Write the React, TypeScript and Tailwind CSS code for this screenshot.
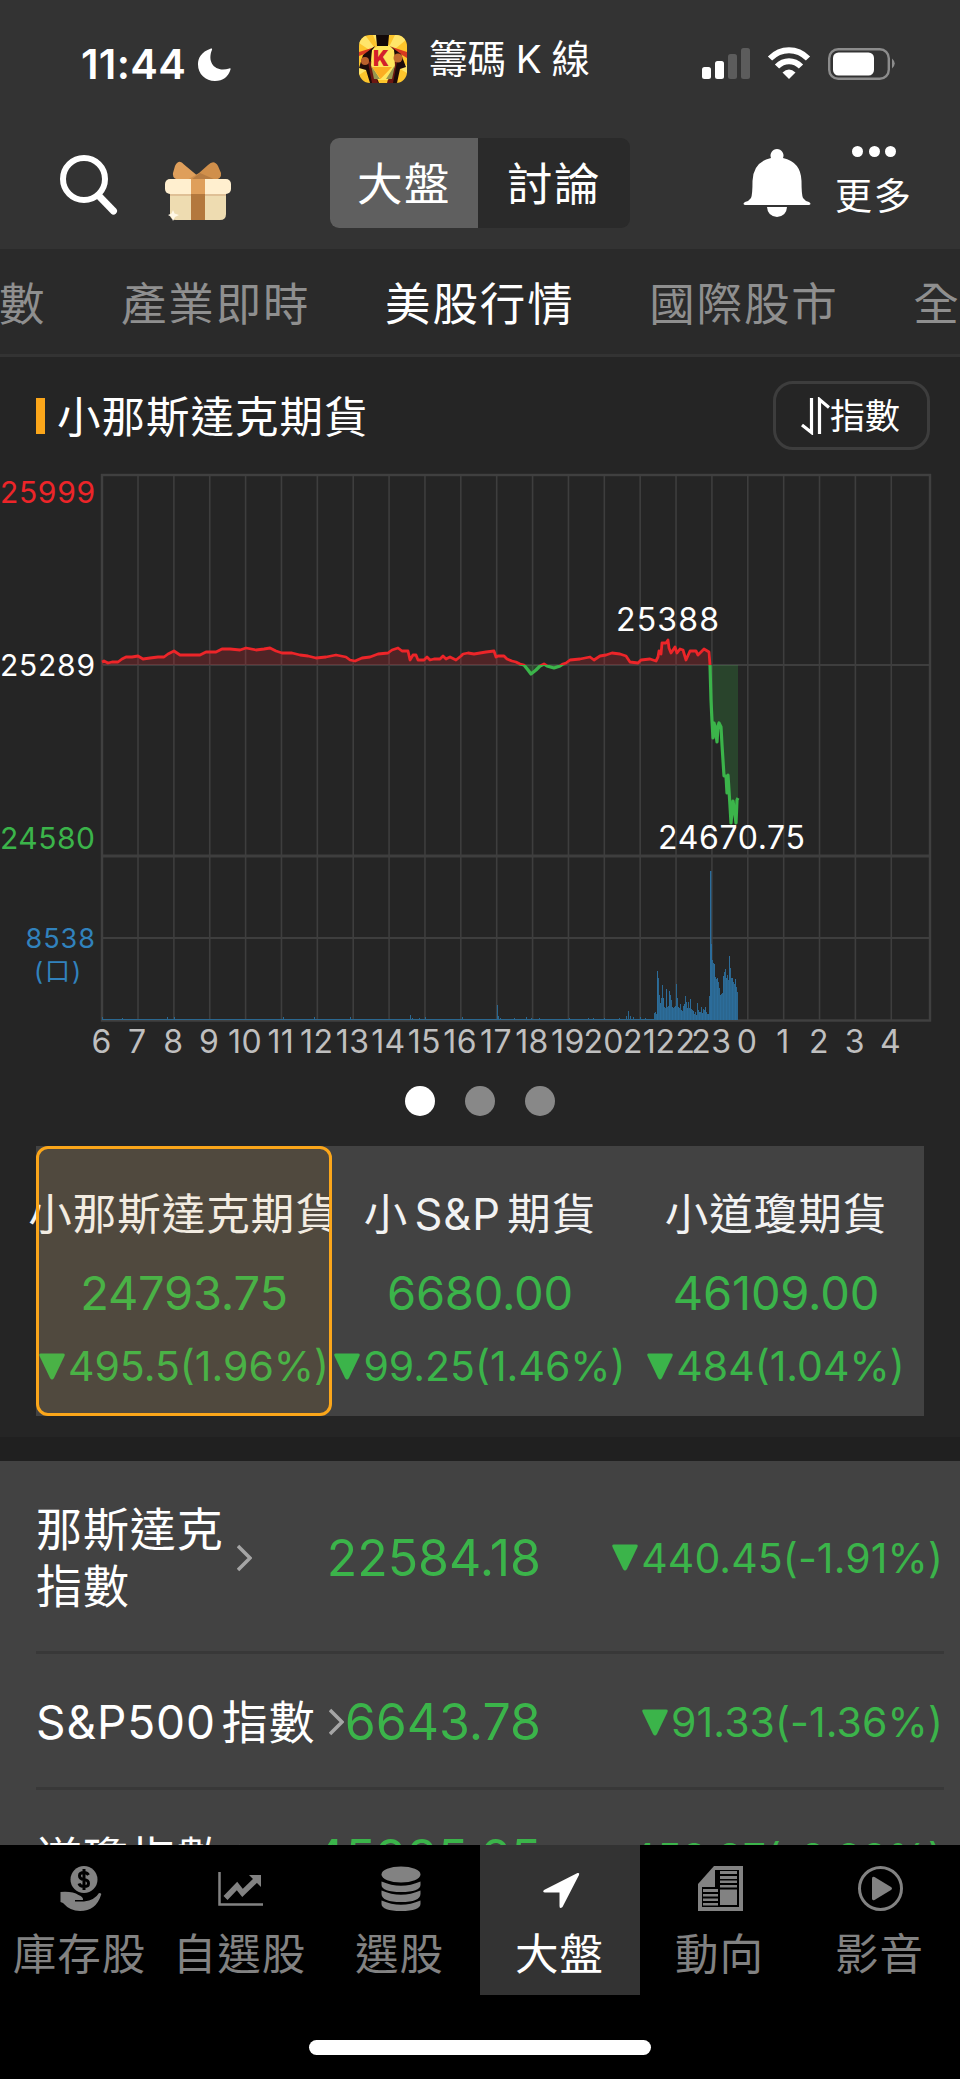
import React from "react";

type Quote = {
  name: string[];
  price: string;
  change: string;
};

const futures = [
  { name: "小那斯達克期貨", price: "24793.75", change: "495.5(1.96%)" },
  { name: "小 S&P 期貨", price: "6680.00", change: "99.25(1.46%)" },
  { name: "小道瓊期貨", price: "46109.00", change: "484(1.04%)" },
];

const indexes: Quote[] = [
  { name: ["那斯達克", "指數"], price: "22584.18", change: "440.45(-1.91%)" },
  { name: ["S&P500 指數"], price: "6643.78", change: "91.33(-1.36%)" },
  { name: ["道瓊指數"], price: "45985.65", change: "459.87(-0.99%)" },
];

const tabs = ["數", "產業即時", "美股行情", "國際股市", "全"];

const hours = [
  "6", "7", "8", "9", "10", "11", "12", "13", "14", "15", "16", "17",
  "18", "19", "20", "21", "22", "23", "0", "1", "2", "3", "4",
];

const BASE = 665;

const pricePoints: number[][] = [
  [102, 662], [104, 661], [108, 663], [112, 662], [118, 662], [122, 659], [126, 657], [132, 657],
  [138, 656], [143, 659], [150, 658], [158, 657], [164, 657], [168, 654], [174, 651], [180, 655],
  [190, 655], [200, 655], [206, 652], [216, 652], [222, 649], [230, 649], [240, 650], [246, 648],
  [256, 650], [264, 649], [270, 648], [276, 651], [282, 653], [292, 653], [300, 655], [308, 656],
  [316, 658], [326, 657], [336, 655], [346, 657], [350, 660], [355, 661], [362, 658], [370, 657],
  [378, 654], [388, 653], [392, 650], [398, 648], [402, 651], [408, 651], [410, 660], [413, 655],
  [416, 655], [418, 660], [424, 660], [427, 657], [430, 660], [434, 659], [440, 659], [443, 656],
  [446, 659], [450, 657], [456, 660], [461, 656], [463, 654], [468, 653], [474, 654], [480, 653],
  [486, 652], [494, 651], [496, 657], [498, 656], [504, 656], [507, 659], [512, 661], [516, 662],
  [520, 664], [524, 665], [528, 670], [531, 674], [536, 670], [540, 666], [544, 664], [547, 666],
  [554, 668], [560, 666], [563, 664], [566, 663], [570, 660], [580, 659], [590, 657], [594, 660],
  [600, 656], [606, 655], [612, 653], [620, 654], [626, 656], [630, 662], [638, 663], [641, 660],
  [650, 659], [656, 661], [658, 657], [659, 651], [661, 654], [662, 643], [666, 643], [668, 640],
  [669, 648], [671, 653], [675, 647], [677, 653], [680, 649], [683, 650], [686, 660], [690, 651],
  [696, 651], [698, 655], [704, 649], [709, 652], [710, 665], [711, 700], [712, 721], [713, 738],
  [714, 723], [715, 727], [717, 742], [718, 726], [719, 723], [721, 727], [722, 745], [724, 776],
  [726, 776], [727, 793], [728, 775], [730, 806], [731, 823], [733, 801], [735, 815], [736, 823],
  [737, 800], [738, 798],
];

const thinVolume: number[][] = [
  [102, 3], [122, 2], [167, 3], [174, 3], [180, 1], [204, 1], [283, 3], [314, 3], [350, 3],
  [410, 5], [412, 2], [419, 2], [425, 3], [462, 3], [497, 15], [498, 4], [500, 2], [514, 2],
  [526, 3], [531, 2], [539, 2], [569, 2], [588, 2], [593, 2], [604, 2], [619, 2], [626, 4],
  [628, 9], [630, 4], [633, 3], [640, 3], [645, 2], [654, 7], [655, 8], [656, 6],
];

// one bar per pixel column, starting at x = 657
const thickVolume = [
  49, 42, 25, 17, 22, 35, 22, 13, 12, 31, 13, 14, 29, 25, 20, 13, 12, 13, 14, 36, 22, 13, 12, 16,
  10, 9, 14, 16, 24, 18, 12, 18, 12, 21, 11, 10, 9, 6, 8, 5, 17, 10, 8, 8, 13, 7, 11, 10, 13, 8, 6,
  6, 24, 148, 76, 60, 57, 56, 43, 41, 42, 38, 32, 25, 26, 27, 44, 48, 51, 42, 45, 40, 64, 52, 42,
  42, 38, 36, 41, 33, 28,
];

const Triangle = () => (
  <svg width="26" height="27" viewBox="0 0 26 27" className="shrink-0">
    <path d="M2 .5h22q2.500 0 1.500 2.500L15 25q-2 3-4 0L.5 3Q-.5.5 2 .5z" fill="#3bb44a" />
  </svg>
);

const AppIcon = () => (
  <svg width="48" height="48" viewBox="0 0 48 48" className="rounded-[11px]">
    <rect width="48" height="48" fill="#fdc52c" />
    <path d="M24 24L0 8V0h6zM24 24L14 0h6zM24 24L36 0h12v4zM24 24L48 30v8zM24 24L0 32v8z" fill="#ffe56a" />
    <path d="M0 17L16 12l-8 6-8 3zM30 11l18 6v6l-10-6z" fill="#d83a20" />
    <path d="M16 11L4 20l-4 13 7 2 4 13h9L12 28l1-12zM31 11l11 8 5 13-6 2-3 14h-9l7-20-1-12z" fill="#1c0b0a" />
    <path d="M9 27l4 21h6l-6-22zM38 27l-4 21h-6l6-22z" fill="#6b1713" />
    <path d="M13 15L20 10h10l5 5 1 16-7 14H19l-7-14z" fill="#ffe65c" />
    <path d="M17 0h13l-1 11H18z" fill="#120807" />
    <path d="M12 30l9 14h-6zM36 30l-9 14h6z" fill="#97964f" />
    <path d="M13 32h20L21.500 44z" fill="#fbae22" />
    <circle cx="6" cy="26" r="4" fill="#b9602c" />
    <circle cx="39" cy="23" r="4.500" fill="#c06a2e" />
    <text x="22" y="31" textAnchor="middle" fontSize="21" fontWeight="900" fontFamily="Inter, sans-serif" fill="#d3202a">K</text>
  </svg>
);

const StatusBar = () => (
  <div className="flex h-[126px] items-start">
    <span className="mt-[43px] ml-[81px] w-[117px] text-[41.500px] leading-[42px] font-semibold tracking-[0.300px]">11:44</span>
    <svg width="34" height="34" viewBox="0 0 34 34" className="mt-[47px]">
      <path d="M13 1.500C3 5 0 11 0 17.500 0 27 7.500 34 17 34c8 0 13.500-4.500 15.500-11.500.3-1-.3-1.500-1.200-1.100C18 26 8.500 16 14 2.800c.4-1-.1-1.600-1-1.300z" fill="#fff" />
    </svg>
    <div className="mt-[35px] ml-[127px]">
      <AppIcon />
    </div>
    <span className="mt-[39px] ml-[22px] w-[250px] text-[38.500px] leading-[40px] [word-spacing:-1px]">籌碼 K 線</span>
    <svg width="194" height="34" viewBox="0 0 194 34" className="mt-[47px] ml-[23px]">
      <rect x="0" y="20" width="9" height="12" rx="2.500" fill="#fff" />
      <rect x="13" y="14" width="9" height="18" rx="2.500" fill="#fff" />
      <rect x="26" y="7" width="9" height="25" rx="2.500" fill="#5c5c5c" />
      <rect x="39" y="1" width="9" height="31" rx="2.500" fill="#5c5c5c" />
      <path d="M68 11.500C79 .5 95 .5 106 11.500" stroke="#fff" strokeWidth="6" fill="none" />
      <path d="M75 19.500C82 12.500 92 12.500 99 19.500" stroke="#fff" strokeWidth="6" fill="none" />
      <path d="M80.500 25.500Q87 19.500 93.500 25.500L87 32z" fill="#fff" />
      <rect x="127.200" y="2.200" width="59.600" height="29.600" rx="9" stroke="#8c8c8c" strokeWidth="2.400" fill="none" />
      <rect x="131" y="5.500" width="41" height="23" rx="5.500" fill="#fff" />
      <path d="M190 11.500q5.500 5 0 10z" fill="#8c8c8c" />
    </svg>
  </div>
);

const TopBar = () => (
  <div className="flex h-[123px] items-start">
    <svg width="60" height="62" viewBox="0 0 60 62" className="mt-[28px] ml-[59px]" fill="none" stroke="#fff">
      <circle cx="25" cy="25" r="21" strokeWidth="6" />
      <path d="M40 42l14.500 15" strokeWidth="7" strokeLinecap="round" />
    </svg>
    <svg width="68" height="62" viewBox="1 0 68 62" className="mt-[33px] ml-[45px]">
      <path d="M36 18L21 5.500Q16-.5 12 7L10 14q-1 7 8 7h18z" fill="#df9f5b" />
      <path d="M36 14l9-8q6-6 10 1l3 7q1 6-7 7H24z" fill="#d08f4b" />
      <path d="M37 14l16 7H28z" fill="#b77c42" />
      <path d="M7 30h56v25q0 6-6 6H13q-6 0-6-6z" fill="#eedcb1" />
      <path d="M7 34h56v3H7z" fill="#dfc096" />
      <rect x="2" y="20" width="66" height="15" rx="5" fill="#ffefcf" />
      <path d="M28 35h14v26H28z" fill="#b3783d" />
      <path d="M28 20h14v15H28z" fill="#df9f5b" />
      <path d="M10 51l1.500 3.500L16 56l-4 2-2 4-1.500-4L5 56l3.500-1.500z" fill="#fff8e6" />
    </svg>
    <div className="mt-[12px] ml-[98px] flex h-[90px] w-[300px] overflow-hidden rounded-[9px] bg-[#2a2a2a] text-[45.500px] leading-[94px] tracking-[1.500px]">
      <div className="w-[148px] bg-[#5f5f5f] pl-[27px]">大盤</div>
      <div className="flex-1 pl-[29px]">討論</div>
    </div>
    <svg width="68" height="68" viewBox="0 0 68 68" className="mt-[23px] ml-[113px]" fill="#fff">
      <path d="M28 9a6.500 6.500 0 1 1 12 0q18 4 18.500 23 0 14 1.500 17 2 3 6 4 3 2 0 3H2q-3-1 0-3 4-1 6-4 1.500-3 1.500-17Q10 13 28 9z" />
      <path d="M24 58h20q-.5 9-10 10-9.500-1-10-10z" />
    </svg>
    <div className="mt-[20px] ml-[24px] flex w-[78px] flex-col items-center">
      <div className="flex gap-[5.500px]">
        <i className="size-[11px] rounded-full bg-white" />
        <i className="size-[11px] rounded-full bg-white" />
        <i className="size-[11px] rounded-full bg-white" />
      </div>
      <span className="mt-[20px] text-[37px] leading-[40px] tracking-[2px]">更多</span>
    </div>
  </div>
);

const Chart = () => {
  const line = pricePoints.map((p) => p.join(",")).join(" ");
  const area = `102,${BASE} ${line} 738,${BASE}`;
  return (
    <svg width="960" height="600" viewBox="0 468 960 600" fontFamily="Inter, 'Noto Sans CJK TC', sans-serif">
      <defs>
        <clipPath id="up"><rect x="100" y="470" width="840" height={BASE - 470} /></clipPath>
        <clipPath id="down"><rect x="100" y={BASE} width="840" height="200" /></clipPath>
      </defs>
      {hours.slice(1).map((h, i) => (
        <path key={h} d={`M${138 + i * 35.87} 475V1020`} stroke="#3e3e3e" strokeWidth="1.600" />
      ))}
      <path d="M102 665H930M102 938H930" stroke="#3e3e3e" strokeWidth="1.800" />
      <path d="M102 856H930" stroke="#3e3e3e" strokeWidth="2.800" />
      <rect x="102" y="475" width="828" height="545.500" fill="none" stroke="#404040" strokeWidth="2.400" />

      <path d="M103 1019.500H737" stroke="#2b678f" strokeWidth="1" />
      {thinVolume.map(([x, h]) => (
        <rect key={x} x={x} y={1020 - h} width="1" height={h} fill="#2b678f" />
      ))}
      {thickVolume.map((h, i) => (
        <rect key={i} x={657 + i} y={1020 - h} width="1" height={h} fill={i % 3 ? "#2b6790" : "#2c6d9b"} />
      ))}
      <rect x="710" y="871" width="1.400" height="149" fill="#2c6d9b" />

      <g clipPath="url(#up)">
        <polygon points={area} fill="#e8252c" fillOpacity="0.220" />
        <polyline points={line} fill="none" stroke="#ed2529" strokeWidth="2.800" strokeLinejoin="round" />
      </g>
      <g clipPath="url(#down)">
        <polygon points={area} fill="#3bb44a" fillOpacity="0.220" />
        <polyline points={line} fill="none" stroke="#3bb44a" strokeWidth="3.200" strokeLinejoin="round" />
      </g>

      <g fontSize="30">
        <text x="0" y="503" textLength="95" fill="#ed2529">25999</text>
        <text x="0" y="676" textLength="95" fill="#fff">25289</text>
        <text x="0" y="849" textLength="95" fill="#3bb44a">24580</text>
      </g>
      <g fill="#3182bd" fontSize="27">
        <text x="25.500" y="948" textLength="69.500">8538</text>
        <text x="34" y="980" textLength="47" fontSize="25">(口)</text>
      </g>
      <g fill="#fff" fontSize="32">
        <text x="616" y="631" textLength="103">25388</text>
        <text x="658" y="849" textLength="147">24670.75</text>
      </g>
      <g fill="#bfbfbf" fontSize="32" letterSpacing="0.400" textAnchor="middle">
        {hours.map((h, i) => (
          <text key={h} x={101.500 + i * 35.87} y="1053">{h}</text>
        ))}
      </g>
    </svg>
  );
};

const Futures = () => (
  <div className="mx-9 flex h-[270px]">
    {futures.map((f, i) => (
      <div key={f.name} className="relative flex w-[296px] flex-col items-center bg-[#424242] whitespace-nowrap">
        <div className="mt-[42px] flex h-[52px] w-[340px] justify-center self-center text-[43.500px] leading-[52px] tracking-[1px] text-[#f2f2f2] [word-spacing:-7px]">{f.name}</div>
        <div className="mt-[27px] text-[47px] leading-[52px] tracking-[-0.200px] text-[#3bb44a]">{f.price}</div>
        <div className="mt-[21px] flex items-center gap-[3px] text-[41px] leading-[52px] text-[#3bb44a]">
          <Triangle />
          {f.change}
        </div>
        {i === 0 && <div className="absolute inset-0 rounded-[12px] border-[3px] border-[#fba61a] bg-[#fba61a]/8" />}
      </div>
    ))}
  </div>
);

const IndexRow = ({ item }: { item: Quote }) => (
  <div className={`mr-4 ml-9 flex shrink-0 items-center border-b-[3px] border-[#383838] pt-[3px] whitespace-nowrap ${item.name.length > 1 ? "h-[193px]" : "h-[136px]"}`}>
    <div className="flex w-[505px] items-center">
      <div className="text-[46px] leading-[57px] tracking-[0.900px] [word-spacing:-8px]">
        {item.name.map((n) => (
          <div key={n}>{n}</div>
        ))}
      </div>
      <svg width="15" height="28" viewBox="0 0 15 28" className="ml-[13px] shrink-0" fill="none" stroke="#a5a5a5" strokeWidth="3.500">
        <path d="M1 2l12 12L1 26" />
      </svg>
      <div className="ml-auto text-[50px] leading-[56px] text-[#3bb44a]">{item.price}</div>
    </div>
    <div className="ml-auto flex items-center gap-[3px] pr-px text-[41px] leading-[52px] tracking-[0.100px] text-[#3bb44a]">
      <Triangle />
      {item.change}
    </div>
  </div>
);

const navItems = [
  {
    label: "庫存股",
    icon: (
      <>
        <circle cx="26" cy="13.500" r="13.500" />
        <path d="M30.500 9Q29 6.500 26 6.500c-6 0-6 6 0 7 6 1 6 7 0 7q-4 0-5-3M26 3v21" fill="none" stroke="#000" strokeWidth="3" />
        <path d="M2.500 26q12-1 18 3 5 2 4.500 5h-8v1.500h9Q37 34 41 27q3 0 2 2-5 16-21 16-10 0-17-8l-2.500-1z" />
      </>
    ),
  },
  {
    label: "自選股",
    icon: (
      <>
        <path d="M1.500 6v32.500H45" fill="none" stroke="currentColor" strokeWidth="2.500" />
        <path d="M7.500 32L19 20l5.500 7L40 12" fill="none" stroke="currentColor" strokeWidth="5.500" />
        <path d="M31 9h12v12z" />
      </>
    ),
  },
  {
    label: "選股",
    icon: (
      <>
        <ellipse cx="23" cy="8.500" rx="19.500" ry="8" />
        <path d="M3.500 15.500Q23 24 42.500 15.500V19Q42 26 23 26T3.500 19zM3.500 24.500Q23 33 42.500 24.500V28Q42 36 23 36T3.500 28zM3.500 34.500Q23 43 42.500 34.500V38Q42 45 23 45T3.500 38z" />
      </>
    ),
  },
  {
    label: "大盤",
    icon: <path d="M6 24L39.500 7q2.500-.5 1.500 2L24.500 41q-3 2.500-3-1V26.500H7q-3-.5-1-2.500z" />,
  },
  {
    label: "動向",
    icon: (
      <>
        <path d="M16 0h29v45H0V18z" />
        <path d="M17 4v17H4v20h37V4z" fill="#000" />
        <path d="M22 5h17v3H22zM22 10h17v3H22zM22 14.500h17v2.500H22zM22 19h17v2.500H22zM22 23.500h17V39H22zM5 23h15v3H5zM5 28h15v2.500H5zM5 32.500h15V35H5zM5 37h15v2.500H5z" />
      </>
    ),
  },
  {
    label: "影音",
    icon: (
      <>
        <circle cx="22.500" cy="22.500" r="21" fill="none" stroke="currentColor" strokeWidth="3" />
        <path d="M14 12.500q0-2.500 2.500-1.500L33 21q2 1.500 0 3L16.500 34q-2.500 1-2.500-1.500z" />
      </>
    ),
  },
];

const BottomNav = () => (
  <div className="flex h-[234px] shrink-0 flex-col bg-black">
    <div className="flex h-[150px]">
      {navItems.map((item) => (
        <div key={item.label} className={`flex w-[160px] flex-col items-center ${item.label === "大盤" ? "bg-[#333333] text-white" : "text-[#828282]"}`}>
          <svg width="45" height="45" viewBox="0 0 45 45" fill="currentColor" className="mt-[21px] shrink-0 overflow-visible">
            {item.icon}
          </svg>
          <span className="mt-[17px] mr-px text-[43.500px] leading-[52px] tracking-[1px]">{item.label}</span>
        </div>
      ))}
    </div>
    <div className="mt-[45px] ml-[309px] h-[15px] w-[342px] rounded-full bg-white" />
  </div>
);

const App = () => {
  return (
    <div className="flex h-[2079px] w-[960px] flex-col overflow-hidden bg-[#252525] font-['Inter','Noto_Sans_CJK_TC',sans-serif] text-white">
      <div className="h-[249px] shrink-0 bg-[#333333]">
        <StatusBar />
        <TopBar />
      </div>

      <div className="flex h-[108px] shrink-0 gap-[74.500px] overflow-hidden border-b-[3px] border-[#333333] bg-[#2a2a2a] text-[45.500px] leading-[111px] tracking-[1.900px] whitespace-nowrap text-[#8f8f8f]">
        {tabs.map((t) => (
          <span key={t} className={`first:-ml-px ${t === "美股行情" ? "text-white" : ""}`}>{t}</span>
        ))}
      </div>

      <div className="flex h-[111px] shrink-0 items-start">
        <div className="mt-[41px] ml-9 h-9 w-[9px] bg-[#fba61a]" />
        <h1 className="mt-[34px] ml-[12px] text-[43.500px] leading-[52px] tracking-[1px]">小那斯達克期貨</h1>
        <button className="mt-[24px] mr-[30px] ml-auto flex h-[69px] w-[157px] items-center rounded-[20px] border-[3px] border-[#3d3d3d] pl-[25px] text-[35px] leading-[40px]">
          <svg width="29" height="38" viewBox="0 0 29 38" fill="none" stroke="#fff" strokeWidth="3.200">
            <path d="M1 28l9.500 7.500V1M18.500 37V2.500L28 10.500" />
          </svg>
          <span>指數</span>
        </button>
      </div>

      <div className="shrink-0">
        <Chart />
      </div>

      <div className="flex h-[78px] shrink-0 justify-center gap-[30px] pt-[18px]">
        <i className="size-[30px] rounded-full bg-white" />
        <i className="size-[30px] rounded-full bg-[#888888]" />
        <i className="size-[30px] rounded-full bg-[#888888]" />
      </div>

      <Futures />

      <div className="mt-[21px] h-6 shrink-0 bg-[#202020]" />

      <div className="flex h-[384px] shrink-0 flex-col overflow-hidden bg-[#424242]">
        {indexes.map((item) => (
          <IndexRow key={item.price} item={item} />
        ))}
      </div>

      <BottomNav />
    </div>
  );
};

export default App;
